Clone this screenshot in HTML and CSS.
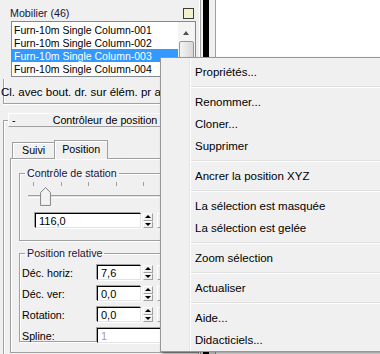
FILE: index.html
```html
<!DOCTYPE html>
<html lang="fr">
<head>
<meta charset="UTF-8">
<link rel="stylesheet" href="styles.css">
<title>Mobilier</title>
</head>
<body>
<div id="desk">
  <div id="panel">
    <div class="objhead"><span>Mobilier (46)</span><i class="swatch"></i></div>

    <div class="listbox">
      <ul class="items">
        <li>Furn-10m Single Column-001</li>
        <li>Furn-10m Single Column-002</li>
        <li class="sel">Furn-10m Single Column-003</li>
        <li>Furn-10m Single Column-004</li>
      </ul>
      <div class="vscroll"><span class="sb-up"></span><span class="sb-thumb"></span></div>
    </div>

    <div class="hint"><span>Cl. avec bout. dr. sur élém. pr aff.</span></div>

    <div class="rollout">
      <div class="rhead"><span class="minus">-</span><span class="rtitle">Contrôleur de position</span></div>
      <div class="tabs"><span class="tab">Suivi</span><span class="tab on">Position</span></div>
      <div class="tabpanel">
        <fieldset class="grp station">
          <legend>Contrôle de station</legend>
          <div class="ticks"><i></i><i></i><i></i><i></i><i></i><i></i></div>
          <div class="track">
            <svg class="knob" style="left: 12px" width="11" height="19" viewBox="0 0 11 19"><path d="M0.5 5.5 L5.5 0.5 L10.5 5.5 L10.5 18.5 L0.5 18.5 Z" fill="#e4e4e4" stroke="#8c8c8c"/><path d="M1.5 6 L5.5 2 L9.5 6 L9.5 17.5 L1.5 17.5 Z" fill="#f3f3f3"/></svg>
          </div>
          <div class="spin wide">
            <span class="edit">116,0</span>
            <span class="arrows"><b class="up"></b><b class="dn"></b></span>
            <span class="key"></span>
          </div>
        </fieldset>

        <fieldset class="grp relpos">
          <legend>Position relative</legend>
          <div class="row">
            <label>Déc. horiz:</label>
            <span class="edit">7,6</span>
            <span class="arrows"><b class="up"></b><b class="dn"></b></span>
            <span class="key"></span>
          </div>
          <div class="row">
            <label>Déc. ver:</label>
            <span class="edit">0,0</span>
            <span class="arrows"><b class="up"></b><b class="dn"></b></span>
            <span class="key"></span>
          </div>
          <div class="row">
            <label>Rotation:</label>
            <span class="edit">0,0</span>
            <span class="arrows"><b class="up"></b><b class="dn"></b></span>
            <span class="key"></span>
          </div>
          <div class="row">
            <label>Spline:</label>
            <span class="edit off">1</span>
          </div>
        </fieldset>
      </div>
    </div>
  </div>

  <div class="splitter"><i class="bar"></i></div>
  <div class="viewport"></div>
</div>

<!-- right-click menu, floats over the panel -->
<ul class="ctxmenu">
  <li>Propriétés...</li>
  <li class="sep"></li>
  <li>Renommer...</li>
  <li>Cloner...</li>
  <li>Supprimer</li>
  <li class="sep"></li>
  <li>Ancrer la position XYZ</li>
  <li class="sep"></li>
  <li>La sélection est masquée</li>
  <li>La sélection est gelée</li>
  <li class="sep"></li>
  <li>Zoom sélection</li>
  <li class="sep"></li>
  <li>Actualiser</li>
  <li class="sep"></li>
  <li>Aide...</li>
  <li>Didacticiels...</li>
</ul>
</body>
</html>
```

FILE: styles.css
```css
* {
  box-sizing: border-box;
}
html, body {
  margin: 0;
  padding: 0;
}
body {
  width: 380px;
  height: 354px;
  overflow: hidden;
  position: relative;
  background: #fff;
  font-family: "Liberation Sans", Arial, sans-serif;
  color: #000;
}

#desk {
  display: flex;
  height: 354px;
}

/*===============================*/
/* Command panel                 */
/*===============================*/
#panel {
  width: 199px;
  flex: none;
  background: #f0f0f0;
  font-size: 10.7px;
  overflow: hidden;
}

.objhead {
  display: flex;
  justify-content: space-between;
  height: 21px;
  padding: 6px 5px 0 10px;
  line-height: 14px;
  color: #14143c;
}
.swatch {
  width: 11px;
  height: 11px;
  margin-top: 2px;
  border: 1px solid #3c3c3c;
  background: #f2f2cc;
}

.listbox {
  display: flex;
  width: 185px;
  height: 56px;
  margin-left: 11px;
  padding-top: 1px;
  border: 1px solid #828790;
  background: #fff;
}
.items {
  flex: 1;
  margin: 0;
  padding: 0;
  list-style: none;
  overflow: hidden;
  font-size: 10.5px;
}
.items li {
  height: 13px;
  line-height: 11px;
  padding: 2px 0 0 2px;
  white-space: nowrap;
}
.items li.sel {
  background: #3399ff;
  color: #fff;
}
.vscroll {
  width: 17px;
  margin-top: -1px;
  display: flex;
  flex-direction: column;
  align-items: center;
  background: #f4f4f4;
}
.sb-up {
  height: 19px;
  width: 17px;
  position: relative;
}
.sb-up:after {
  content: "";
  position: absolute;
  left: 5px;
  top: 9px;
  border-left: 3.5px solid transparent;
  border-right: 3.5px solid transparent;
  border-bottom: 4px solid #505050;
}
.sb-thumb {
  width: 15px;
  height: 30px;
  border: 1px solid #979797;
  border-radius: 2px;
  background: linear-gradient(to right, #f4f4f4, #e6e6e6 50%, #d8d8d8);
}

.hint {
  height: 25px;
  margin: 2px 0 0 3px;
  padding-top: 7px;
  border-left: 1px solid #a0a0a0;
  border-bottom: 1px solid #a0a0a0;
  box-shadow: inset 1px 0 0 #fff, 0 1px 0 #fff;
  white-space: nowrap;
  font-size: 11.5px;
  line-height: 12px;
}
.hint span {
  display: block;
  margin-left: -3px;
}

/*===============================*/
/* Rollout                       */
/*===============================*/
.rollout {
  margin: 16px 0 0 3px;
  height: 300px;
  border: 1px solid #a0a0a0;
  box-shadow: inset 1px 1px 0 #fff;
}
.rhead {
  display: flex;
  align-items: center;
  height: 14px;
  margin: -8px 4px 0 4px;
  padding: 0 3px;
  background: #f0f0f0;
  border: 1px solid;
  border-color: #fff #a0a0a0 #a0a0a0 #fff;
  line-height: 12px;
}
.minus {
  width: 8px;
}
.rtitle {
  flex: 1;
  text-align: center;
}

.tabs {
  display: flex;
  align-items: flex-end;
  height: 31px;
  margin-left: 8px;
  position: relative;
  z-index: 1;
}
.tab {
  height: 16px;
  padding: 0 9px 0 9px;
  line-height: 15px;
  border: 1px solid #a0a0a0;
  border-bottom: none;
  background: #f0f0f0;
  box-shadow: inset 1px 1px 0 #fff;
}
.tab + .tab {
  margin-left: -1px;
}
.tab.on {
  height: 19px;
  margin-bottom: -1px;
  padding: 0 7px;
  line-height: 17px;
}

.tabpanel {
  margin-left: 6px;
  height: 195px;
  border: 1px solid #a0a0a0;
  box-shadow: inset 1px 1px 0 #fff;
  padding: 8px 0 0 8px;
}

.grp {
  margin: 0;
  padding: 0 0 0 2px;
  width: 175px;
  border: 1px solid #a0a0a0;
  box-shadow: inset 1px 1px 0 #fff, 1px 1px 0 #fff;
  min-inline-size: 0;
}
.grp legend {
  margin-left: 3px;
  padding: 0 2px;
  line-height: 13px;
  color: #14143c;
}
.station {
  height: 74px;
}
.relpos {
  height: 95px;
  margin-top: 6px;
}

.ticks {
  display: flex;
  gap: 26.5px;
  height: 4px;
  margin: 2px 0 0 11px;
}
.ticks i {
  width: 1px;
  height: 4px;
  background: #a0a0a0;
}
.track {
  position: relative;
  height: 3px;
  margin: 9px 0 0 6px;
  border-top: 1px solid #a0a0a0;
  border-bottom: 1px solid #fff;
  background: #e0e0e0;
}
.knob {
  position: absolute;
  top: -9px;
  display: block;
}

.spin,
.row {
  display: flex;
  align-items: center;
  height: 15px;
}
.spin.wide {
  margin: 15px 0 0 13px;
}
.row {
  margin-top: 6px;
}
.row:first-of-type {
  margin-top: 5px;
}
.row label {
  width: 75px;
}
.edit {
  width: 44px;
  height: 15px;
  padding: 1px 0 0 3px;
  line-height: 12px;
  font-size: 11px;
  background: #fff;
  border: 1px solid;
  border-color: #000 #e3e3e3 #e3e3e3 #000;
  box-shadow: -1px -1px 0 #a0a0a0, 1px 1px 0 #fff;
}
.spin.wide .edit {
  width: 106px;
}
.edit.off {
  width: 90px;
  color: #a0a0a0;
}
.arrows {
  display: flex;
  flex-direction: column;
  width: 10px;
  height: 15px;
  margin-left: 2px;
}
.arrows b {
  flex: 1;
  position: relative;
  border: 1px solid;
  border-color: #fff #a0a0a0 #a0a0a0 #fff;
}
.arrows b:after {
  content: "";
  position: absolute;
  left: 1px;
  border-left: 3px solid transparent;
  border-right: 3px solid transparent;
}
.arrows .up:after {
  top: 1px;
  border-bottom: 3px solid #000;
}
.arrows .dn:after {
  top: 1px;
  border-top: 3px solid #000;
}
.key {
  width: 10px;
  height: 15px;
  margin-left: 4px;
  border: 1px solid;
  border-color: #fff #a0a0a0 #a0a0a0 #fff;
  background: linear-gradient(#f0f0f0 55%, #e8a040 55%, #e8a040 70%, #f0f0f0 70%) 2px 0 / 3px 100% no-repeat;
}

/*===============================*/
/* Splitter and viewport         */
/*===============================*/
.splitter {
  width: 17px;
  flex: none;
  display: flex;
  background: #f0f0f0;
  border-left: 1px solid #fff;
  border-right: 1px solid #a0a0a0;
  box-shadow: inset 1px 0 0 #a0a0a0;
  padding-left: 3px;
}
.splitter .bar {
  width: 6px;
  background: #000;
}
.viewport {
  flex: 1;
  background: #fff;
}

/*===============================*/
/* Context menu                  */
/*===============================*/
.ctxmenu {
  position: absolute;
  left: 160px;
  top: 57px;
  width: 230px;
  margin: 0;
  padding: 3px 2px 0;
  list-style: none;
  background: #f0f0f0 linear-gradient(to right, transparent 28px, #e2e3e3 28px, #e2e3e3 29px, #fff 29px, #fff 30px, transparent 30px);
  border: 1px solid #979797;
  box-shadow: 2px 2px 3px rgba(0, 0, 0, 0.4);
  font-size: 11.5px;
}
.ctxmenu li {
  height: 22px;
  line-height: 22px;
  padding-left: 32px;
  white-space: nowrap;
}
.ctxmenu li.sep {
  height: 8px;
  padding: 0;
  margin-left: 28px;
  border-top: 3px solid #f0f0f0;
  border-bottom: 3px solid #f0f0f0;
  background: linear-gradient(#e0e0e0 50%, #fff 50%);
}
```
